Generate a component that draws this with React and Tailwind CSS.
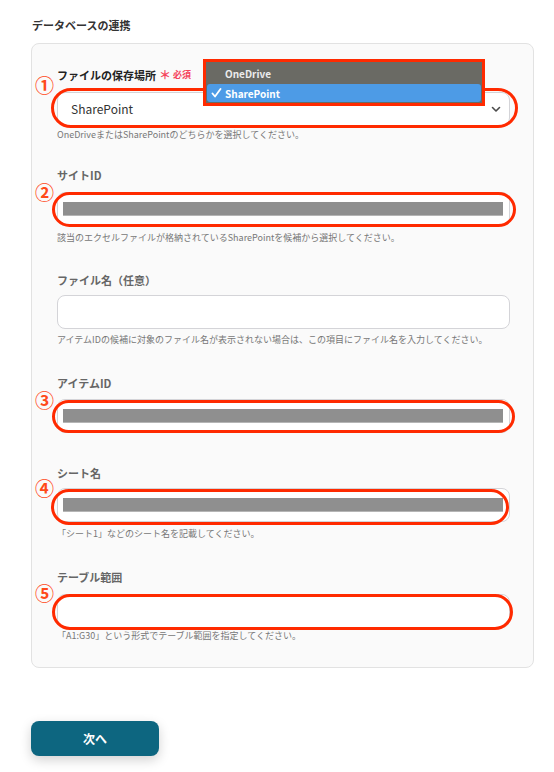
import React from "react";

const FONT = "font-['Noto_Sans_CJK_JP','Noto_Sans',sans-serif]";

function Bar() {
  return (
    <div className="flex h-[34px] w-full items-center rounded-[8px] border border-[#d4d4d8] bg-white pl-[5px] pr-[6px]">
      <div className="h-[14px] w-full border-b border-[#b5b5b5] bg-[#8f8f8f]" />
    </div>
  );
}

function Circle({ n, cls }) {
  return (
    <span className={`pointer-events-none absolute -left-[22px] text-[19px] font-bold leading-none text-[#ff4a1a] ${cls}`}>{n}</span>
  );
}

function Label({ children, dark }) {
  return (
    <div className={`text-[11px] font-bold leading-[16px] ${dark ? "text-[#222]" : "text-[#666]"}`}>{children}</div>
  );
}

function Help({ children, cls }) {
  return <p className={`text-[9px] leading-[12px] text-[#777] ${cls}`}>{children}</p>;
}

export default function App() {
  return (
    <div className={`flex min-h-[772px] w-[554px] flex-col items-start bg-white pl-[31px] pr-[20px] pt-[17px] ${FONT}`}>
      <h2 className="pl-[1px] text-[11px] font-bold leading-[16px] text-[#333]">データベースの連携</h2>
      <div className="mt-[10px] flex w-full flex-col rounded-[8px] border border-[#e2e2e2] bg-[#fafafa] pb-[25px] pl-[25px] pr-[23px] pt-[23px]">
        {/* Field 1 */}
        <section className="flex flex-col">
          <div className="flex items-center text-[11px] font-bold leading-[16px] text-[#222]">
            <span>ファイルの保存場所</span>
            <span className="ml-[3px] text-[12px] text-[#f5455c]">＊</span>
            <span className="ml-[2px] text-[9px] text-[#f5455c]">必須</span>
          </div>
          <div className="relative mt-[9px]">
            <Circle n="①" cls="-top-[17px]" />
            <div className="flex h-[34px] items-center justify-between rounded-[8px] border border-[#d4d4d8] bg-white pl-[13px] pr-[8px]">
              <span className="text-[12px] text-[#333]">SharePoint</span>
              <svg width="10" height="7" viewBox="0 0 10 7" className="mt-[1px]">
                <polyline points="1.5,1.5 5,5 8.5,1.5" fill="none" stroke="#4b4b4b" strokeWidth="1.6" strokeLinecap="round" strokeLinejoin="round" />
              </svg>
            </div>
            <div className="pointer-events-none absolute -bottom-[2px] -left-[6px] -right-[8px] -top-[4px] rounded-full border-[3px] border-[#ff2a00]" />
            <div className="absolute left-[146px] -top-[33px] flex h-[47px] w-[282px] flex-col border-[3px] border-[#ff2a00] bg-[#6a6a64] px-[1px] pb-[1px]">
              <div className="flex h-[22px] items-center pl-[18px] text-[10px] font-semibold text-[#ececec]">OneDrive</div>
              <div className="flex flex-1 items-center rounded-[3px] bg-[#4d9be6] pl-[4px] text-[10px] font-semibold text-white">
                <svg width="11" height="10" viewBox="0 0 11 10" className="mr-[3px]">
                  <polyline points="1.5,5.5 4,8.5 9.5,1" fill="none" stroke="#fff" strokeWidth="1.8" strokeLinecap="round" strokeLinejoin="round" />
                </svg>
                SharePoint
              </div>
            </div>
          </div>
          <Help cls="mt-[3px]">OneDriveまたはSharePointのどちらかを選択してください。</Help>
        </section>

        {/* Field 2 */}
        <section className="mt-[26px] flex flex-col">
          <Label>サイトID</Label>
          <div className="relative mt-[9px]">
            <Circle n="②" cls="-top-[10px]" />
            <Bar />
            <div className="pointer-events-none absolute -bottom-[1px] -left-[5px] -right-[6px] top-0 rounded-full border-[3px] border-[#ff2a00]" />
          </div>
          <Help cls="mt-[6px]">該当のエクセルファイルが格納されているSharePointを候補から選択してください。</Help>
        </section>

        {/* Field 3 */}
        <section className="mt-[28px] flex flex-col">
          <Label>ファイル名（任意）</Label>
          <div className="mt-[7px] h-[34px] rounded-[8px] border border-[#d4d4d8] bg-white" />
          <Help cls="mt-[5px]">アイテムIDの候補に対象のファイル名が表示されない場合は、この項目にファイル名を入力してください。</Help>
        </section>

        {/* Field 4 */}
        <section className="mt-[29px] flex flex-col">
          <Label>アイテムID</Label>
          <div className="relative mt-[8px]">
            <Circle n="③" cls="-top-[9px]" />
            <Bar />
            <div className="pointer-events-none absolute -left-[5px] -right-[5px] bottom-0 top-[1px] rounded-full border-[3px] border-[#ff2a00]" />
          </div>
        </section>

        {/* Field 5 */}
        <section className="mt-[32px] flex flex-col">
          <Label>シート名</Label>
          <div className="relative mt-[7px]">
            <Circle n="④" cls="-top-[10px]" />
            <Bar />
            <div className="pointer-events-none absolute -bottom-[3px] -left-[6px] right-[1px] top-[1px] rounded-full border-[3px] border-[#ff2a00]" />
          </div>
          <Help cls="mt-[6px]">「シート1」などのシート名を記載してください。</Help>
        </section>

        {/* Field 6 */}
        <section className="mt-[29px] flex flex-col">
          <Label>テーブル範囲</Label>
          <div className="relative mt-[9px]">
            <Circle n="⑤" cls="-top-[11px]" />
            <div className="h-[34px] rounded-[8px] border border-[#d4d4d8] bg-white" />
            <div className="pointer-events-none absolute -bottom-[2px] -left-[5px] -right-[3px] top-0 rounded-full border-[3px] border-[#ff2a00]" />
          </div>
          <Help cls="mt-[2px]">「A1:G30」という形式でテーブル範囲を指定してください。</Help>
        </section>
      </div>

      <button className="mt-[53px] flex h-[35px] w-[128px] items-center justify-center rounded-[8px] bg-[#0d6680] text-[12px] font-bold text-white shadow-[0_4px_12px_rgba(0,0,0,0.18)]">
        次へ
      </button>
    </div>
  );
}
